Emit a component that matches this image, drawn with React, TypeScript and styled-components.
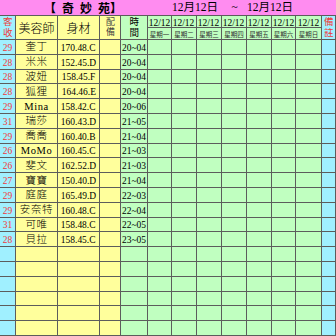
import React from "react";
import styled, { createGlobalStyle } from "styled-components";

const Global = createGlobalStyle`
  html, body { margin: 0; padding: 0; background: #ffffff; }
  body { font-family: "Liberation Serif", "Noto Sans CJK TC", serif; }
`;

const PINK = "#ff8cf0";
const CYAN = "#a0f0ff";
const YELLOW = "#ffff9c";
const GREEN = "#c0ffc0";
const RED = "#f03a3a";
const LINE = "#5c5c5c";

const Sheet = styled.div`
  width: 336px;
  height: 336px;
  display: grid;
  grid-template-columns: 16px 42px 42px 21px 27px 24px 25px 25px 25px 25px 24px 26px 14px;
  grid-template-rows: 16px 12px 12px repeat(20, 14.8px);
  overflow: hidden;
`;

const TitlePart = styled.div<{ $cols: string; $justify: string; $pad?: number }>`
  grid-column: ${(p) => p.$cols};
  box-sizing: border-box;
  background: ${PINK};
  border-bottom: 1px solid ${LINE};
  display: flex;
  align-items: center;
  justify-content: ${(p) => p.$justify};
  padding-left: ${(p) => p.$pad ?? 0}px;
  color: #000;
  white-space: nowrap;
  overflow: hidden;
`;

const Brand = styled.div`
  display: flex;
  align-items: center;
  font-family: "Noto Sans CJK TC", serif;
  font-size: 12px;
  font-weight: 700;
  line-height: 15px;
`;

const BrandChar = styled.span<{ $ml: number }>`
  margin-left: ${(p) => p.$ml}px;
`;

const DateText = styled.span`
  font-size: 11.5px;
  line-height: 15px;
  font-family: "Liberation Serif", "Noto Sans CJK TC", serif;
`;

const Cell = styled.div<{ $bg: string; $color?: string; $rows?: number }>`
  box-sizing: border-box;
  background: ${(p) => p.$bg};
  color: ${(p) => p.$color ?? "#000"};
  border-right: 1px solid ${LINE};
  border-bottom: 1px solid ${LINE};
  grid-row: ${(p) => (p.$rows ? `span ${p.$rows}` : "auto")};
  display: flex;
  align-items: center;
  justify-content: center;
  overflow: hidden;
  min-width: 0;
  min-height: 0;
`;

const VLabel = styled.span<{ $size: number }>`
  writing-mode: vertical-rl;
  font-family: "Noto Sans CJK TC", serif;
  font-size: ${(p) => p.$size}px;
  line-height: ${(p) => p.$size + 1}px;
  letter-spacing: 1.5px;
`;

const HeadLabel = styled.span`
  font-family: "Noto Sans CJK TC", serif;
  font-size: 12px;
  line-height: 14px;
  font-weight: 300;
`;

const Weekday = styled.span`
  font-family: "Noto Sans CJK TC", serif;
  font-size: 6.5px;
  line-height: 10px;
  color: #333;
  white-space: nowrap;
`;

const Num = styled.span`
  display: inline-block;
  font-family: "Liberation Serif", serif;
  font-size: 11px;
  line-height: 12px;
  transform: scaleX(0.86);
  white-space: nowrap;
`;

const Name = styled.span`
  font-family: "Liberation Serif", "Noto Sans CJK TC", serif;
  font-size: 10.5px;
  line-height: 13px;
  font-weight: 300;
  letter-spacing: 0.6px;
  white-space: nowrap;
`;

const days = ["星期一", "星期二", "星期三", "星期四", "星期五", "星期六", "星期日"];

const rows: [string, string, string, string][] = [
  ["29", "奎丁", "170.48.C", "20~04"],
  ["28", "米米", "152.45.D", "20~04"],
  ["28", "波妞", "158.45.F", "20~04"],
  ["28", "狐狸", "164.46.E", "20~04"],
  ["29", "Mina", "158.42.C", "20~06"],
  ["31", "瑞莎", "160.43.D", "21~05"],
  ["29", "喬喬", "160.40.B", "21~04"],
  ["26", "MoMo", "160.45.C", "21~03"],
  ["26", "斐文", "162.52.D", "21~03"],
  ["27", "寶寶", "150.40.D", "21~04"],
  ["29", "庭庭", "165.49.D", "22~03"],
  ["29", "安奈特", "160.48.C", "22~04"],
  ["31", "可唯", "158.48.C", "22~05"],
  ["28", "貝拉", "158.45.C", "23~05"],
];

const TOTAL_ROWS = 20;

export default function App() {
  const data = Array.from({ length: TOTAL_ROWS }, (_, i) => rows[i] ?? ["", "", "", ""]);
  return (
    <>
      <Global />
      <Sheet>
        <TitlePart $cols="1 / 7" $justify="flex-start" $pad={44}>
          <Brand>
            <BrandChar $ml={0}>【</BrandChar>
            <BrandChar $ml={6}>奇</BrandChar>
            <BrandChar $ml={6}>妙</BrandChar>
            <BrandChar $ml={6}>苑</BrandChar>
            <BrandChar $ml={0}>】</BrandChar>
          </Brand>
        </TitlePart>
        <TitlePart $cols="7 / 9" $justify="flex-start">
          <DateText>12月12日</DateText>
        </TitlePart>
        <TitlePart $cols="9 / 10" $justify="center">
          <DateText>~</DateText>
        </TitlePart>
        <TitlePart $cols="10 / -1" $justify="flex-start">
          <DateText>12月12日</DateText>
        </TitlePart>

        <Cell $bg={CYAN} $color={RED} $rows={2}>
          <VLabel $size={9.5}>客收</VLabel>
        </Cell>
        <Cell $bg={YELLOW} $rows={2}>
          <HeadLabel>美容師</HeadLabel>
        </Cell>
        <Cell $bg={YELLOW} $rows={2}>
          <HeadLabel>身材</HeadLabel>
        </Cell>
        <Cell $bg={YELLOW} $color="#444" $rows={2}>
          <VLabel $size={9}>配備</VLabel>
        </Cell>
        <Cell $bg={GREEN} $rows={2}>
          <VLabel $size={9.5}>時間</VLabel>
        </Cell>
        {days.map((d) => (
          <Cell key={"date" + d} $bg={GREEN}>
            <Num>12/12</Num>
          </Cell>
        ))}
        <Cell $bg={CYAN} $color={RED} $rows={2}>
          <VLabel $size={9.5}>備註</VLabel>
        </Cell>
        {days.map((d) => (
          <Cell key={d} $bg={GREEN}>
            <Weekday>{d}</Weekday>
          </Cell>
        ))}

        {data.map(([age, name, size, time], i) => (
          <React.Fragment key={i}>
            <Cell $bg={CYAN} $color={RED}>
              <Num>{age}</Num>
            </Cell>
            <Cell $bg={YELLOW}>
              <Name>{name}</Name>
            </Cell>
            <Cell $bg={YELLOW}>
              <Num>{size}</Num>
            </Cell>
            <Cell $bg={YELLOW} />
            <Cell $bg={GREEN}>
              <Num>{time}</Num>
            </Cell>
            {days.map((d) => (
              <Cell key={d} $bg={GREEN} />
            ))}
            <Cell $bg={CYAN} />
          </React.Fragment>
        ))}
      </Sheet>
    </>
  );
}
